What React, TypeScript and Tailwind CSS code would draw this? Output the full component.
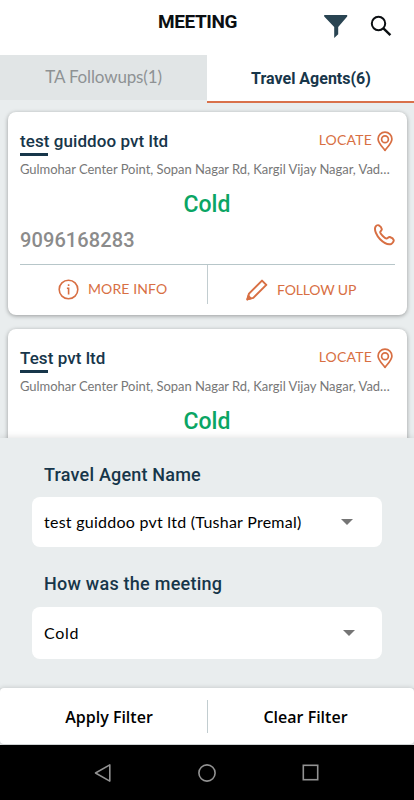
import React from "react";

const body = "font-['Lato','Noto_Sans',sans-serif]";
const heading = "font-[Roboto,'Noto_Sans',sans-serif]";

function PinIcon() {
  return (
    <svg width="16" height="21" viewBox="0 0 16 21" fill="none" stroke="#d86f43" strokeWidth="1.7" className="shrink-0">
      <path d="M8 19.4C5.700 16.200 1.100 12.200 1.100 8a6.900 6.900 0 0 1 13.800 0c0 4.200-4.600 8.200-6.900 11.400Z" strokeLinejoin="round" />
      <circle cx="8" cy="8.200" r="3.400" />
    </svg>
  );
}

function PhoneIcon() {
  return (
    <svg width="22" height="22" viewBox="0 0 22 22" fill="none" stroke="#d86f43" strokeWidth="2" strokeLinejoin="round" strokeLinecap="round">
      <path d="M2.4 2.900C3.200 1.500 5 .9 5.900 1.400c1.100.6 2.700 2.600 2.900 3.700.2 1.300-1.700 2.200-1.600 3.300.2 1.600 4.600 6 6.300 6.100 1.200.1 2-1.900 3.300-1.500 1.200.4 3.600 2 3.900 3 .3 1.200-1.300 3.500-2.600 4-3 .9-7.500-1.300-11-4.800C3.600 11.700 1 6 2.400 2.900Z" />
    </svg>
  );
}

function InfoIcon() {
  return (
    <svg width="21" height="21" viewBox="0 0 21 21" fill="none" stroke="#d86f43" strokeWidth="1.6">
      <circle cx="10.5" cy="10.5" r="9.3" />
      <path d="M8.900 9.200h1.700v6.300M10.600 5.200v1.800" />
    </svg>
  );
}

function PencilIcon() {
  return (
    <svg width="22" height="22" viewBox="0 0 22 22" fill="none" stroke="#d86f43" strokeWidth="2" strokeLinejoin="round">
      <path d="M1.400 20.400 3 14.600 16 1.600l4.300 4.300-13 13Z" />
      <path d="M1.400 20.400 2.400 17l2.400 2.400Z" fill="#d86f43" />
    </svg>
  );
}

function AgentCard({ name }: { name: string }) {
  return (
    <article className="h-[203px] shrink-0 rounded-lg bg-white pl-3 pr-3 pt-[19px] shadow-[0_1px_4px_rgba(0,0,0,0.35)]">
      <div className="flex h-[22px] justify-between">
        <h2 className={`${heading} text-[17px] font-medium leading-[21px] tracking-[0.07px] text-[#17364a]`}>{name}</h2>
        <div className="flex items-start gap-[5px] pr-[2px]">
          <span className={`${body} text-[14px] leading-[18px] tracking-[0.2px] text-[#d86f43]`}>LOCATE</span>
          <PinIcon />
        </div>
      </div>
      <div className="h-[3px] w-7 bg-[#17364a]" />
      <p className={`${body} mt-1 w-[371px] truncate text-[13px] leading-[19px] tracking-[-0.03px] text-[#777]`}>
        Gulmohar Center Point, Sopan Nagar Rd, Kargil Vijay Nagar, Vad…
      </p>
      <div className={`${heading} mt-3 pr-px text-center text-[23px] font-medium leading-7 text-[#0aa564]`}>Cold</div>
      <div className="mt-[5px] flex h-10 items-start justify-between">
        <span className={`${heading} text-[20px] font-medium leading-8 tracking-[0.1px] text-[#8b8b8b]`}>9096168283</span>
        <PhoneIcon />
      </div>
      <div className="flex w-[375px] border-t border-[#b7c6c9]">
        <div className="flex h-[39px] w-[188px] items-start gap-[9px] border-r border-[#c2cdd0] pl-[38px] pt-[14px]">
          <InfoIcon />
          <span className={`${body} text-[14px] leading-[20px] tracking-[0.1px] text-[#d86f43]`}>MORE INFO</span>
        </div>
        <div className="flex h-[39px] items-start gap-[9px] pl-[38px] pt-[14px]">
          <PencilIcon />
          <span className={`${body} text-[14px] leading-[21px] tracking-[-0.15px] text-[#d86f43]`}>FOLLOW UP</span>
        </div>
      </div>
    </article>
  );
}

function Caret() {
  return (
    <svg width="12" height="6" viewBox="0 0 12 6" fill="#757575">
      <path d="M0 0h12L6 6Z" />
    </svg>
  );
}

export default function App() {
  return (
    <div className="flex h-[800px] w-[414px] flex-col overflow-hidden bg-[#e9edee]">
      <header className="flex h-[55px] shrink-0 bg-white">
        <h1 className={`${heading} ml-[158px] w-[166px] text-[19px] font-bold leading-[44px] tracking-[-0.4px] text-[#0b0f12]`}>MEETING</h1>
        <svg width="24" height="24" viewBox="0 0 24 24" className="mt-[14px]" fill="#294452">
          <path d="M.2 1h23v1.600L14.200 13v7.200L10.200 24V13L.2 2.600Z" />
        </svg>
        <svg width="22" height="22" viewBox="0 0 22 22" className="ml-[22px] mt-[15px]" fill="none" stroke="#0b0f12" strokeWidth="2">
          <circle cx="8.500" cy="8.500" r="6.700" />
          <path d="m13.400 13.400 7 6.800" strokeWidth="2.400" />
        </svg>
      </header>

      <nav className="flex h-12 shrink-0 items-start">
        <button className={`${body} h-[45px] w-[207px] bg-[#e1e5e6] pb-[2px] text-[17px] tracking-[-0.15px] text-[#8e9294]`}>TA Followups(1)</button>
        <button className={`${heading} h-12 w-[207px] border-b-2 border-[#d9714b] bg-white pl-px pt-px text-[16px] font-bold text-[#17364a]`}>
          Travel Agents(6)
        </button>
      </nav>

      <main className="flex h-[335px] shrink-0 flex-col gap-[14px] overflow-hidden pl-2 pr-[7px] pt-[9px]">
        <AgentCard name="test guiddoo pvt ltd" />
        <AgentCard name="Test pvt ltd" />
      </main>

      <section className="relative flex h-[250px] shrink-0 flex-col bg-[#e9edee] pl-8 pr-8 pt-[22px] shadow-[0_0_7px_rgba(0,0,0,0.14)]">
        <label className={`${heading} pl-3 text-[18px] font-medium leading-[29px] tracking-[0.2px] text-[#17364a]`}>Travel Agent Name</label>
        <div className={`${body} mt-2 flex h-[50px] items-center justify-between rounded-lg bg-white pl-3 pr-[29px] text-[16px] tracking-[0.25px] text-black`}>
          <span>test guiddoo pvt ltd (Tushar Premal)</span>
          <Caret />
        </div>
        <label className={`${heading} mt-[23px] pl-3 text-[18px] font-medium leading-[28px] tracking-[0.25px] text-[#17364a]`}>How was the meeting</label>
        <div className={`${body} mt-[9px] flex h-[52px] items-center justify-between rounded-lg bg-white pl-3 pr-[27px] text-[16px] tracking-[0.7px] text-black`}>
          <span>Cold</span>
          <Caret />
        </div>
      </section>

      <footer className="relative flex h-[57px] shrink-0 items-center rounded-sm border-b border-[#cfd3d4] bg-white font-['Open_Sans',sans-serif] text-[16px] font-semibold text-black shadow-[0_0_5px_rgba(0,0,0,0.18)]">
        <button className="w-[207px] pl-[11px] pt-px">Apply Filter</button>
        <div className="h-[33px] w-px bg-[#c2cdd0]" />
        <button className="w-[206px] pr-[11px] pt-px">Clear Filter</button>
      </footer>

      <div className="relative flex h-[55px] shrink-0 items-center justify-center gap-[86px] bg-black pr-px">
        <svg width="18" height="20" viewBox="0 0 18 20" fill="none" stroke="#929292" strokeWidth="1.6">
          <path d="M1.500 10 15.800 1.900v16.200Z" strokeLinejoin="round" />
        </svg>
        <svg width="18" height="18" viewBox="0 0 18 18" fill="none" stroke="#929292" strokeWidth="1.6">
          <circle cx="9" cy="9" r="8.100" />
        </svg>
        <svg width="17" height="17" viewBox="0 0 17 17" fill="none" stroke="#929292" strokeWidth="1.6">
          <rect x="1.300" y="1.300" width="14.400" height="14.400" />
        </svg>
      </div>
    </div>
  );
}
